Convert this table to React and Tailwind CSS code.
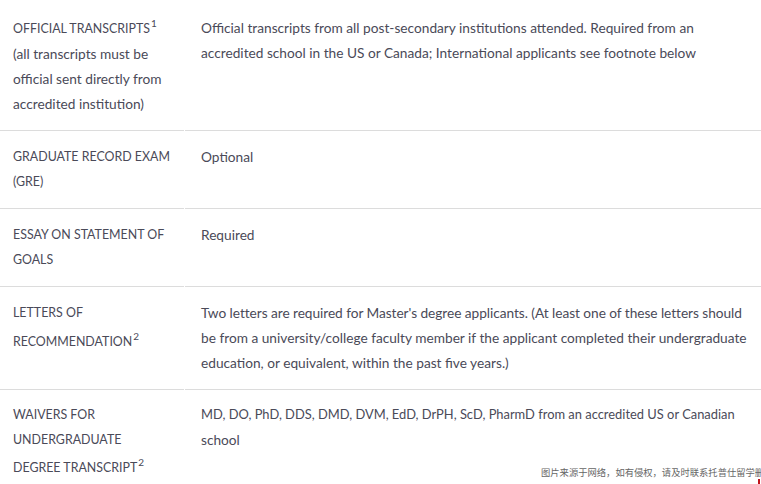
export default function App() {
  const sup = "relative top-[-6px] text-[10px] leading-none ml-[1px]";
  const cap = "text-[12.4px]";
  const cellL = "w-[184px] shrink-0 pl-[13px] pr-[4px] border-b border-[#dcdcdc] mr-[1px] whitespace-nowrap";
  const cellR = "flex-1 pl-[16px] pr-[2px] border-b border-[#dcdcdc] whitespace-nowrap";
  return (
    <div
      className="w-[761px] h-[484px] overflow-hidden bg-white text-[#4a4a58] relative"
      style={{ fontFamily: "Lato, 'Noto Sans', sans-serif" }}
    >
      <div className="text-[13.7px] leading-[25px]">
        {/* Row 1 */}
        <div className="flex">
          <div className={cellL + " pt-[13px] pb-[14px]"}>
            <div className="pt-[2px]"><span className={cap}>OFFICIAL TRANSCRIPTS</span><span className={sup}>1</span></div>
            <div>(all transcripts must be</div>
            <div>official sent directly from</div>
            <div>accredited institution)</div>
          </div>
          <div className={cellR + " pt-[15px]"}>
            <div>Official transcripts from all post-secondary institutions attended. Required from an</div>
            <div>accredited school in the US or Canada; International applicants see footnote below</div>
          </div>
        </div>
        {/* Row 2 */}
        <div className="flex">
          <div className={cellL + " pt-[13px] pb-[14px]"}>
            <div className={cap}>GRADUATE RECORD EXAM</div>
            <div className={cap}>(GRE)</div>
          </div>
          <div className={cellR + " pt-[13px] pb-[14px]"}>
            <div>Optional</div>
          </div>
        </div>
        {/* Row 3 */}
        <div className="flex">
          <div className={cellL + " pt-[13px] pb-[14px]"}>
            <div className={cap}>ESSAY ON STATEMENT OF</div>
            <div className={cap}>GOALS</div>
          </div>
          <div className={cellR + " pt-[13px] pb-[14px]"}>
            <div>Required</div>
          </div>
        </div>
        {/* Row 4 */}
        <div className="flex">
          <div className={cellL + " pt-[13px] pb-[14px]"}>
            <div className={cap}>LETTERS OF</div>
            <div className="pt-[3px]"><span className={cap}>RECOMMENDATION</span><span className={sup}>2</span></div>
          </div>
          <div className={cellR + " pt-[13px] pb-[14px]"}>
            <div className="tracking-[-0.05px]">Two letters are required for Master's degree applicants. (At least one of these letters should</div>
            <div>be from a university/college faculty member if the applicant completed their undergraduate</div>
            <div>education, or equivalent, within the past five years.)</div>
          </div>
        </div>
        {/* Row 5 */}
        <div className="flex">
          <div className="w-[184px] shrink-0 pl-[13px] pr-[4px] pt-[12px] mr-[1px] whitespace-nowrap">
            <div className={cap}>WAIVERS FOR</div>
            <div className={cap}>UNDERGRADUATE</div>
            <div className="pt-[2px]"><span className={cap}>DEGREE TRANSCRIPT</span><span className={sup}>2</span></div>
          </div>
          <div className="flex-1 pl-[16px] pr-[2px] pt-[12px] whitespace-nowrap">
            <div className="text-[12.9px]">MD, DO, PhD, DDS, DMD, DVM, EdD, DrPH, ScD, PharmD from an accredited US or Canadian</div>
            <div>school</div>
          </div>
        </div>
      </div>
      <div
        className="absolute left-[541px] top-[467px] text-[9.3px] leading-[11px] text-[#666666] whitespace-nowrap bg-white"
        style={{ fontFamily: "'Noto Sans CJK SC', sans-serif" }}
      >
        图片来源于网络，如有侵权，请及时联系托普仕留学删除
      </div>
      <div className="absolute left-[758px] top-[479px] w-[2px] h-[5px] bg-[#c0141b]" />
    </div>
  );
}
